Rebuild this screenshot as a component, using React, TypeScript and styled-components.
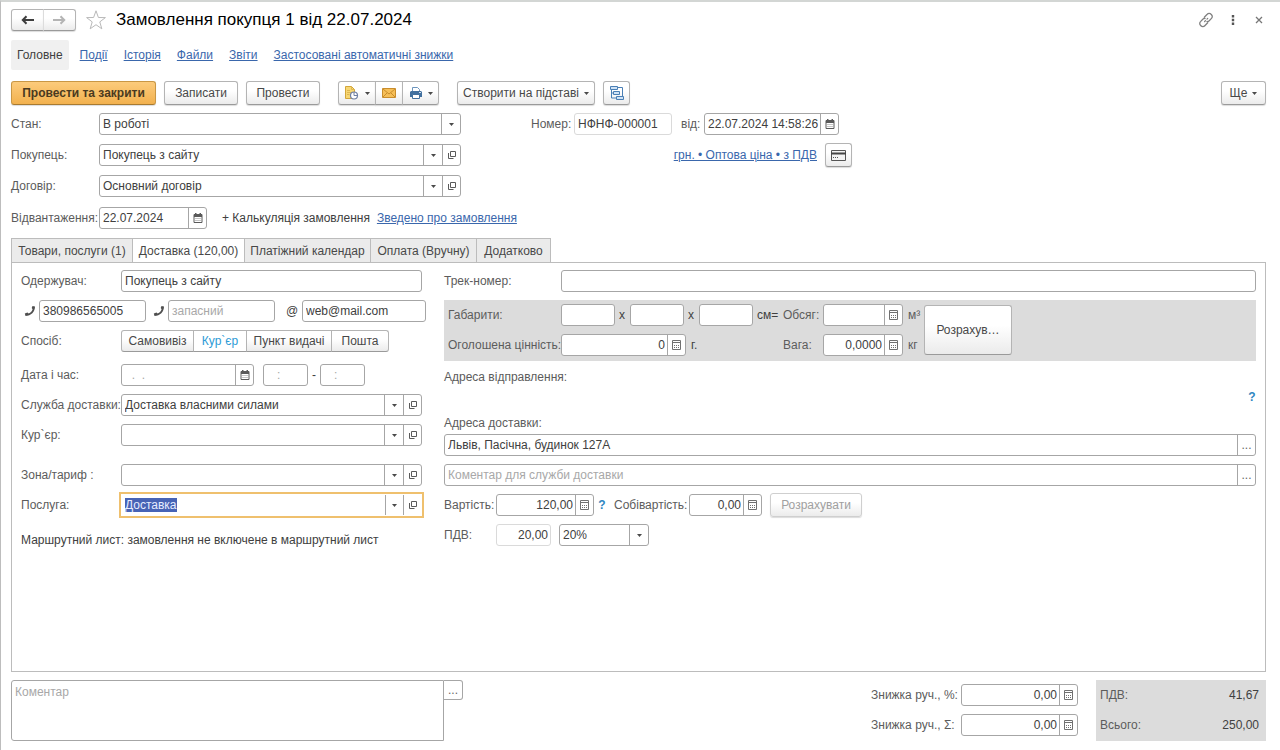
import React, { useEffect, useRef, useState } from "react";
import styled, { createGlobalStyle, css } from "styled-components";

const GlobalStyle = createGlobalStyle`
  *, *::before, *::after { box-sizing: border-box; }
  body { margin: 0; background: #fff; }
  body, button, input, select, textarea {
    font-family: "Liberation Sans", Arial, sans-serif;
    font-size: 12px;
    color: #404040;
  }
  button, input, select, textarea { margin: 0; }
  ::selection { background: #4763b5; color: #e6ecff; }
`;

const line = "#a6a6a6";

/* ---------- page frame ---------- */

const Page = styled.main`
  display: flex;
  flex-direction: column;
  min-height: 100vh;
  padding: 7px 14px 9px 10px;
  border-top: 2px solid #d3d6d4;
  border-left: 1px solid #bdbdbd;
`;

const TitleBar = styled.header`
  display: flex;
  align-items: center;
  height: 22px;
`;

const Title = styled.h1`
  flex: 1;
  margin: 0 0 0 9px;
  font-size: 17px;
  font-weight: 400;
  line-height: 22px;
  color: #000;
`;

const WindowActions = styled.div`
  display: flex;
  align-items: center;
  gap: 12px;
`;

const PlainButton = styled.button`
  display: flex;
  align-items: center;
  justify-content: center;
  min-width: 14px;
  height: 20px;
  padding: 0;
  border: 0;
  background: none;
`;

const StarButton = styled(PlainButton)`
  margin-left: 9px;
`;

const Sections = styled.nav`
  display: flex;
  align-items: center;
  gap: 16px;
  height: 30px;
  margin-top: 9px;
`;

const sectionLink = css`
  line-height: 14px;
`;

const CurrentSection = styled.a`
  ${sectionLink}
  margin-right: -5px;
  padding: 8px 6px;
  border-radius: 2px;
  background: #f0f0f0;
  color: #404040;
  text-decoration: none;
`;

const Link = styled.a`
  ${sectionLink}
  color: #3a67ac;
  text-decoration: underline;
`;

/* ---------- buttons ---------- */

const raised = css`
  border: 1px solid #b4b4b4;
  border-bottom-color: #9a9a9a;
  background: linear-gradient(#fff 40%, #ebebeb);
`;

const Toolbar = styled.div`
  display: flex;
  align-items: center;
  gap: 8px;
  height: 24px;
  margin-top: 11px;
`;

const Button = styled.button<{ $width?: number; $primary?: boolean }>`
  ${raised}
  display: flex;
  align-items: center;
  justify-content: center;
  gap: 5px;
  flex: none;
  min-width: ${(p) => p.$width ?? 26}px;
  height: 24px;
  padding: 0;
  border-radius: 3px;
  box-shadow: 0 1px 1px #dcdcdc;
  color: #484848;
  ${(p) =>
    p.$primary &&
    css`
      border-color: #c99745;
      border-bottom-color: #a87a30;
      background: linear-gradient(#fccb7c, #f2b14e);
      color: #4a3a20;
      font-weight: 700;
    `}
  &:disabled {
    color: #a0a0a0;
    border-color: #cfcfcf;
  }
`;

const ButtonGroup = styled.div`
  display: flex;
  flex: none;
  margin: 0 10px;
  & > button { border-radius: 0; }
  & > button + button { margin-left: -1px; }
  & > button:first-child { border-radius: 3px 0 0 3px; }
  & > button:last-child { border-radius: 0 3px 3px 0; }
`;

const HistoryGroup = styled(ButtonGroup)`
  margin: 0;
  & > button { height: 22px; min-width: 33px; }
  & > button + button { border-left-color: #dcdcdc; }
`;

const Spacer = styled.div`
  flex: 1;
`;

/* ---------- fields ---------- */

const FieldBox = styled.div<{ $width?: number; $focus?: boolean; $quiet?: boolean }>`
  display: flex;
  ${(p) => (p.$width ? css`flex: none; width: ${p.$width}px;` : css`flex: 1; min-width: 0;`)}
  height: 22px;
  border: 1px solid ${(p) => (p.$quiet ? "#dadada" : line)};
  border-radius: 3px;
  background: #fff;
  overflow: hidden;
  ${(p) =>
    p.$focus &&
    css`
      border-color: #fff;
      border-radius: 0;
      outline: 2px solid #efc06e;
    `}
`;

const TextInput = styled.input<{ $right?: boolean }>`
  flex: 1;
  min-width: 0;
  width: 0;
  height: 20px;
  padding: ${(p) => (p.$right ? "0 2px" : "0 0 0 3px")};
  border: 0;
  outline: 0;
  background: none;
  text-align: ${(p) => (p.$right ? "right" : "left")};
  &::placeholder { color: #a8a8a8; opacity: 1; }
`;

const CellButton = styled.button`
  display: flex;
  align-items: center;
  justify-content: center;
  flex: none;
  width: 18px;
  padding: 0;
  border: 0;
  border-left: 1px solid ${line};
  background: none;
  color: #666;
`;

const SelectBox = styled.div`
  display: grid;
  grid-template-columns: 1fr 19px;
  flex: 1;
  min-width: 0;
`;

const Select = styled.select`
  grid-area: 1 / 1 / 2 / 3;
  min-width: 0;
  height: 20px;
  padding: 0 20px 0 3px;
  border: 0;
  outline: 0;
  background: none;
  appearance: none;
`;

const SelectArrow = styled.span`
  grid-area: 1 / 2 / 2 / 3;
  display: flex;
  align-items: center;
  justify-content: center;
  border-left: 1px solid ${line};
  pointer-events: none;
`;

const Label = styled.label<{ $width?: number }>`
  flex: none;
  ${(p) => p.$width && css`width: ${p.$width}px;`}
  color: #5c5c5c;
  line-height: 14px;
  white-space: nowrap;
`;

const Text = styled.span`
  flex: none;
  line-height: 14px;
  white-space: nowrap;
`;

const Row = styled.div<{ $top?: number; $gap?: number }>`
  display: flex;
  align-items: center;
  gap: ${(p) => p.$gap ?? 0}px;
  height: 22px;
  margin-top: ${(p) => p.$top ?? 8}px;
`;

/* ---------- document header ---------- */

const DocumentHeader = styled.section`
  display: flex;
  gap: 70px;
  margin-top: 8px;
`;

const HeaderMain = styled.div`
  flex: 0 1 450px;
  min-width: 0;
`;

const HeaderSide = styled.div`
  flex: 0 1 321px;
`;

const PriceRow = styled(Row)`
  justify-content: flex-end;
`;

/* ---------- tabs ---------- */

const TabList = styled.div`
  display: flex;
  height: 25px;
  margin-top: 9px;
`;

const Tab = styled.button<{ $width: number }>`
  min-width: ${(p) => p.$width}px;
  height: 25px;
  padding: 0;
  border: 1px solid #bcbcbc;
  border-right-width: 0;
  background: #ebebeb;
  color: #484848;
  white-space: nowrap;
  &:last-child { border-right-width: 1px; }
  &[aria-selected="true"] {
    background: #fff;
    border-bottom-color: #fff;
  }
`;

const Panel = styled.section`
  display: grid;
  grid-template-columns: minmax(0, 401fr) minmax(0, 812fr);
  column-gap: 22px;
  flex: 1;
  margin-top: -1px;
  padding: 7px 9px;
  border: 1px solid #bcbcbc;
`;

const Column = styled.div`
  min-width: 0;
`;

const ContactsRow = styled(Row)`
  margin-right: -4px;
  padding-left: 3px;
`;

const ContactIcon = styled.span`
  display: flex;
  flex: none;
  width: 15px;
`;

const AtSign = styled(Text)`
  width: 16px;
`;

const Gap = styled.span<{ $size: number }>`
  flex: none;
  width: ${(p) => p.$size}px;
`;

const Segments = styled.div`
  display: flex;
`;

const Segment = styled.label<{ $width: number }>`
  ${raised}
  display: flex;
  align-items: center;
  justify-content: center;
  width: ${(p) => p.$width}px;
  height: 22px;
  margin-right: -1px;
  color: #484848;
  white-space: nowrap;
  &:first-child { border-radius: 3px 0 0 3px; }
  &:last-child { border-radius: 0 3px 3px 0; margin-right: 0; }
  &:has(input:checked) {
    background: #fff;
    color: #2d9bd6;
  }
  input {
    appearance: none;
    width: 0;
    height: 0;
    margin: 0;
    outline: 0;
  }
`;

const RouteNote = styled.p`
  margin: 17px 0 0;
  line-height: 14px;
`;

const Dimensions = styled.div`
  display: flex;
  align-items: center;
  gap: 4px;
  height: 61px;
  margin-top: 8px;
  padding: 0 0 1px 4px;
  background: #dcdcdc;
`;

const DimensionRows = styled.div`
  width: 472px;
`;

const TallButton = styled(Button)`
  height: 50px;
`;

const Caption = styled.div<{ $top: number }>`
  margin-top: ${(p) => p.$top}px;
  color: #5c5c5c;
  line-height: 14px;
`;

const HelpLine = styled.div`
  display: flex;
  justify-content: flex-end;
  height: 14px;
  margin-top: 6px;
`;

const Help = styled.button`
  flex: none;
  width: 8px;
  height: 14px;
  padding: 0;
  border: 0;
  background: none;
  color: #2f86c1;
  font-weight: 700;
  line-height: 14px;
`;

/* ---------- footer ---------- */

const Footer = styled.footer`
  display: flex;
  align-items: flex-start;
  height: 61px;
  margin-top: 8px;
`;

const CommentBox = styled.textarea`
  flex: 0 1 433px;
  height: 61px;
  padding: 4px 3px;
  border: 1px solid ${line};
  border-radius: 3px 0 0 3px;
  outline: 0;
  resize: none;
  line-height: 14px;
  &::placeholder { color: #a8a8a8; opacity: 1; }
`;

const CommentMore = styled.button`
  width: 19px;
  height: 20px;
  padding: 0;
  border: 1px solid ${line};
  border-left: 0;
  border-radius: 0 3px 3px 0;
  background: #fff;
  color: #666;
`;

const Discounts = styled.div`
  margin-right: 18px;
`;

const Totals = styled.dl`
  display: grid;
  grid-template-columns: auto 1fr;
  grid-template-rows: 30px 30px;
  align-items: center;
  width: 170px;
  height: 61px;
  margin: 0;
  padding: 0 7px 0 4px;
  background: #dcdcdc;
  dt { color: #5c5c5c; }
  dd { margin: 0; text-align: right; }
`;

/* ---------- icons ---------- */

const Arrow = () => (
  <svg width="5" height="3" viewBox="0 0 5 3" aria-hidden="true">
    <path d="M0 0h5L2.500 3z" fill="#4a4a4a" />
  </svg>
);

const OpenIcon = () => (
  <svg width="10" height="10" viewBox="0 0 10 10" fill="none" stroke="#5a5a5a" aria-hidden="true">
    <path d="M3.500 1.500h5v5h-5z" />
    <path d="M1.500 3.500v5h4.500M1 3.500h1M6 8v1" />
  </svg>
);

const CalendarIcon = () => (
  <svg width="10" height="10" viewBox="0 0 10 10" aria-hidden="true">
    <path d="M1 1.500h8v8H1z" fill="#fff" stroke="#5a5a5a" />
    <path d="M1 1h8v3H1zM2 0h1.500v2H2zM6.500 0H8v2H6.500z" fill="#5a5a5a" />
    <path d="M2.500 5.500h5M2.500 7.500h5" stroke="#8a8a8a" strokeDasharray="1 1" />
  </svg>
);

const CalculatorIcon = () => (
  <svg width="9" height="10" viewBox="0 0 9 10" fill="none" aria-hidden="true">
    <path d="M.5.5h8v9h-8z" stroke="#707070" />
    <path d="M1 2.500h7" stroke="#707070" />
    <path d="M2 5.500h5M2 7.500h5" stroke="#707070" strokeDasharray="1 1" />
  </svg>
);

const PhoneIcon = () => (
  <svg width="12" height="12" viewBox="0 0 12 12" aria-hidden="true">
    <path d="M8.500 1l2.500.5C11.200 6.500 7 11 1.500 11L.8 8.600l2.700-1 1.100 1C6.800 7.600 8.100 6 8.600 4.200L7.700 3z" fill="#4f4f4f" />
  </svg>
);

const HistoryArrow = ({ forward }: { forward?: boolean }) => (
  <svg width="13" height="10" viewBox="0 0 13 10" fill="none" strokeWidth="2" stroke={forward ? "#b4b4b4" : "#3e3e3e"} aria-hidden="true">
    {forward ? <path d="M0 5h11M7.500 1.300L11.200 5 7.500 8.700" /> : <path d="M13 5H2M5.500 1.300L1.800 5l3.700 3.700" />}
  </svg>
);

const StarIcon = () => (
  <svg width="22" height="22" viewBox="0 0 22 22" fill="#fff" stroke="#b9b9b9" aria-hidden="true">
    <path d="M11 1.800l2.400 6.700 7 .1-5.600 4.300 2 6.900L11 15.700l-5.800 4.100 2-6.900L1.600 8.600l7-.1z" />
  </svg>
);

const ChainIcon = () => (
  <svg width="16" height="16" viewBox="0 0 16 16" fill="none" stroke="#808080" strokeWidth="1.300" strokeLinecap="round" aria-hidden="true">
    <path d="M6.300 5.300l2.900-3a2.600 2.600 0 0 1 3.900 0l.4.400a2.600 2.600 0 0 1 0 3.700l-2.300 2.400a2.600 2.600 0 0 1-2.200.7" />
    <path d="M9.700 10.700l-2.900 3a2.600 2.600 0 0 1-3.900 0l-.4-.4a2.600 2.600 0 0 1 0-3.700l2.300-2.400a2.600 2.600 0 0 1 2.200-.7" />
    <path d="M6.600 9.600l.8-.8M9 7.100l.7-.7" />
  </svg>
);

const DotsIcon = () => (
  <svg width="4" height="12" viewBox="0 0 4 12" fill="#555" aria-hidden="true">
    <path d="M.8 1h2.400v2.400H.8zM.8 4.800h2.400v2.400H.8zM.8 8.600h2.400V11H.8z" />
  </svg>
);

const CloseIcon = () => (
  <svg width="8" height="8" viewBox="0 0 8 8" stroke="#777" strokeWidth="1.300" aria-hidden="true">
    <path d="M1 1l6 6M7 1L1 7" />
  </svg>
);

const ReportIcon = () => (
  <svg width="16" height="16" viewBox="0 0 16 16" fill="none" aria-hidden="true">
    <path d="M1.500 1.500h6l3 3v9h-9z" fill="#f7d774" stroke="#d3a63a" />
    <path d="M7.500 1.500v3h3M3 5.500h3M3 7.500h5M3 9.500h2.500" stroke="#dfb750" />
    <circle cx="10" cy="10.500" r="3.500" fill="#fff" stroke="#6f7fa3" strokeWidth="1.200" />
    <path d="M10 7v3.500h3.500" stroke="#6f7fa3" />
  </svg>
);

const MailIcon = () => (
  <svg width="14" height="10" viewBox="0 0 14 10" fill="none" aria-hidden="true">
    <path d="M.5.500h13v9H.5z" fill="#f6bf58" stroke="#c98d2c" />
    <path d="M1 1l6 5 6-5M1 9l4-4M13 9L9 5" stroke="#c98d2c" />
  </svg>
);

const PrinterIcon = () => (
  <svg width="14" height="14" viewBox="0 0 14 14" fill="none" aria-hidden="true">
    <path d="M3.500 1.500h5l2 2V6h-7z" fill="#fff" stroke="#6b94bd" />
    <path d="M2 5h10l1 1v5H1V6z" fill="#41709f" />
    <path d="M3.500 8.500h7v4h-7z" fill="#fff" stroke="#41709f" />
    <path d="M10 6.500h2" stroke="#cfe0ef" />
  </svg>
);

const StructureIcon = () => (
  <svg width="14" height="14" viewBox="0 0 14 14" fill="#cfe2f5" stroke="#4a7fb5" aria-hidden="true">
    <path d="M1.500 3.500v8.500h5M1.500 7h3M7.500 1.500h5v9" fill="none" />
    <path d="M.5.500h7v3h-7zM3.500 5.500h6v3h-6zM6.500 10.500h7v3h-7z" />
  </svg>
);

const CardIcon = () => (
  <svg width="15" height="11" viewBox="0 0 15 11" fill="none" aria-hidden="true">
    <path d="M.5.500h14v10H.5z" fill="#f4f4f4" stroke="#555" />
    <path d="M0 3.500h15" stroke="#444" strokeWidth="2" />
    <path d="M2 7.500h5" stroke="#555" strokeDasharray="1 1" />
  </svg>
);

/* ---------- composed controls ---------- */

type SelectFieldProps = { id: string; value: string; width?: number; open?: boolean };

const SelectField = ({ id, value, width, open }: SelectFieldProps) => (
  <FieldBox $width={width}>
    <SelectBox>
      <Select id={id} defaultValue={value}>
        <option value={value}>{value}</option>
      </Select>
      <SelectArrow><Arrow /></SelectArrow>
    </SelectBox>
    {open && <CellButton type="button" aria-label="Відкрити"><OpenIcon /></CellButton>}
  </FieldBox>
);

type InputFieldProps = {
  id: string;
  label?: string;
  value?: string;
  placeholder?: string;
  width?: number;
  right?: boolean;
  quiet?: boolean;
  cell?: "calendar" | "calculator" | "more";
};

const cells = {
  calendar: { name: "Календар", icon: <CalendarIcon /> },
  calculator: { name: "Калькулятор", icon: <CalculatorIcon /> },
  more: { name: "Вибрати", icon: "..." },
};

const InputField = ({ id, label, value, placeholder, width, right, quiet, cell }: InputFieldProps) => (
  <FieldBox $width={width} $quiet={quiet}>
    <TextInput id={id} aria-label={label} defaultValue={value} placeholder={placeholder} readOnly={quiet} $right={right} />
    {cell && <CellButton type="button" aria-label={cells[cell].name}>{cells[cell].icon}</CellButton>}
  </FieldBox>
);

const ServiceField = () => {
  const input = useRef<HTMLInputElement>(null);
  useEffect(() => {
    input.current?.focus();
    input.current?.select();
  }, []);
  return (
    <FieldBox $focus>
      <TextInput id="service" ref={input} defaultValue="Доставка" />
      <CellButton type="button" aria-label="Список"><Arrow /></CellButton>
      <CellButton type="button" aria-label="Відкрити"><OpenIcon /></CellButton>
    </FieldBox>
  );
};

const tabs = [
  { name: "Товари, послуги (1)", width: 121 },
  { name: "Доставка (120,00)", width: 112 },
  { name: "Платіжний календар", width: 126 },
  { name: "Оплата (Вручну)", width: 106 },
  { name: "Додатково", width: 75 },
];

const methods = [
  { name: "Самовивіз", width: 73 },
  { name: "Кур`єр", width: 54 },
  { name: "Пункт видачі", width: 86 },
  { name: "Пошта", width: 58 },
];

export default function App() {
  const [tab, setTab] = useState(1);

  return (
    <Page>
      <GlobalStyle />
      <TitleBar>
        <HistoryGroup>
          <Button type="button" aria-label="Назад"><HistoryArrow /></Button>
          <Button type="button" aria-label="Вперед"><HistoryArrow forward /></Button>
        </HistoryGroup>
        <StarButton type="button" aria-label="В обране"><StarIcon /></StarButton>
        <Title>Замовлення покупця 1 від 22.07.2024</Title>
        <WindowActions>
          <PlainButton type="button" aria-label="Посилання"><ChainIcon /></PlainButton>
          <PlainButton type="button" aria-label="Меню"><DotsIcon /></PlainButton>
          <PlainButton type="button" aria-label="Закрити"><CloseIcon /></PlainButton>
        </WindowActions>
      </TitleBar>

      <Sections>
        <CurrentSection href="#main">Головне</CurrentSection>
        <Link href="#events">Події</Link>
        <Link href="#history">Історія</Link>
        <Link href="#files">Файли</Link>
        <Link href="#reports">Звіти</Link>
        <Link href="#discounts">Застосовані автоматичні знижки</Link>
      </Sections>

      <Toolbar>
        <Button type="button" $primary $width={145}>Провести та закрити</Button>
        <Button type="button" $width={74}>Записати</Button>
        <Button type="button" $width={74}>Провести</Button>
        <ButtonGroup>
          <Button type="button" $width={38} aria-label="Звіти"><ReportIcon /><Arrow /></Button>
          <Button type="button" $width={28} aria-label="Надіслати"><MailIcon /></Button>
          <Button type="button" $width={37} aria-label="Друк"><PrinterIcon /><Arrow /></Button>
        </ButtonGroup>
        <Button type="button" $width={138}>Створити на підставі<Arrow /></Button>
        <Button type="button" $width={27} aria-label="Структура"><StructureIcon /></Button>
        <Spacer />
        <Button type="button" $width={45}>Ще<Arrow /></Button>
      </Toolbar>

      <DocumentHeader>
        <HeaderMain>
          <Row $top={0}>
            <Label $width={88} htmlFor="state">Стан:</Label>
            <SelectField id="state" value="В роботі" />
          </Row>
          <Row $top={9}>
            <Label $width={88} htmlFor="buyer">Покупець:</Label>
            <SelectField id="buyer" value="Покупець з сайту" open />
          </Row>
          <Row $top={9}>
            <Label $width={88} htmlFor="contract">Договір:</Label>
            <SelectField id="contract" value="Основний договір" open />
          </Row>
          <Row $top={10}>
            <Label $width={88} htmlFor="shipment">Відвантаження:</Label>
            <InputField id="shipment" value="22.07.2024" width={108} cell="calendar" />
            <Gap $size={15} />
            <Text>+ Калькуляція замовлення</Text>
            <Gap $size={7} />
            <Link href="#summary"><Text>Зведено про замовлення</Text></Link>
          </Row>
        </HeaderMain>
        <HeaderSide>
          <Row $top={0}>
            <Label $width={43} htmlFor="number">Номер:</Label>
            <InputField id="number" value="НФНФ-000001" width={98} quiet />
            <Gap $size={9} />
            <Label $width={23} htmlFor="date">від:</Label>
            <InputField id="date" value="22.07.2024 14:58:26" width={135} cell="calendar" />
          </Row>
          <PriceRow $top={9} $gap={8}>
            <Link href="#prices">грн. • Оптова ціна • з ПДВ</Link>
            <Button type="button" $width={27} aria-label="Картка"><CardIcon /></Button>
          </PriceRow>
        </HeaderSide>
      </DocumentHeader>

      <TabList role="tablist">
        {tabs.map((t, i) => (
          <Tab key={t.name} type="button" role="tab" aria-selected={i === tab} $width={t.width} onClick={() => setTab(i)}>
            {t.name}
          </Tab>
        ))}
      </TabList>

      <Panel role="tabpanel">
        <Column>
          <Row $top={0}>
            <Label $width={100} htmlFor="recipient">Одержувач:</Label>
            <InputField id="recipient" value="Покупець з сайту" />
          </Row>
          <ContactsRow>
            <ContactIcon><PhoneIcon /></ContactIcon>
            <InputField id="phone" label="Телефон" value="380986565005" width={107} />
            <Gap $size={7} />
            <ContactIcon><PhoneIcon /></ContactIcon>
            <InputField id="phone2" label="Запасний телефон" placeholder="запасний" width={107} />
            <Gap $size={11} />
            <AtSign>@</AtSign>
            <InputField id="email" label="Пошта" value="web@mail.com" />
          </ContactsRow>
          <Row>
            <Label as="span" $width={100}>Спосіб:</Label>
            <Segments role="radiogroup" aria-label="Спосіб">
              {methods.map((m, i) => (
                <Segment key={m.name} $width={m.width}>
                  <input type="radio" name="method" defaultChecked={i === 1} />
                  {m.name}
                </Segment>
              ))}
            </Segments>
          </Row>
          <Row $top={12}>
            <Label $width={100} htmlFor="delivery-date">Дата і час:</Label>
            <InputField id="delivery-date" placeholder="  .  ." width={133} cell="calendar" />
            <Gap $size={9} />
            <InputField id="time-from" label="Час від" placeholder="   :" width={45} />
            <Gap $size={4} />
            <Text>-</Text>
            <Gap $size={4} />
            <InputField id="time-to" label="Час до" placeholder="   :" width={45} />
          </Row>
          <Row>
            <Label $width={100} htmlFor="carrier">Служба доставки:</Label>
            <SelectField id="carrier" value="Доставка власними силами" open />
          </Row>
          <Row>
            <Label $width={100} htmlFor="courier">Кур`єр:</Label>
            <SelectField id="courier" value="" open />
          </Row>
          <Row $top={18}>
            <Label $width={100} htmlFor="zone">Зона/тариф :</Label>
            <SelectField id="zone" value="" open />
          </Row>
          <Row>
            <Label $width={100} htmlFor="service">Послуга:</Label>
            <ServiceField />
          </Row>
          <RouteNote>Маршрутний лист: замовлення не включене в маршрутний лист</RouteNote>
        </Column>

        <Column>
          <Row $top={0}>
            <Label $width={117} htmlFor="track">Трек-номер:</Label>
            <InputField id="track" />
          </Row>
          <Dimensions>
            <DimensionRows>
              <Row $top={0}>
                <Label $width={113} htmlFor="length">Габарити:</Label>
                <InputField id="length" width={54} />
                <Gap $size={4} />
                <Text>x</Text>
                <Gap $size={5} />
                <InputField id="width" label="Ширина" width={54} />
                <Gap $size={4} />
                <Text>x</Text>
                <Gap $size={5} />
                <InputField id="height" label="Висота" width={54} />
                <Gap $size={4} />
                <Text>см=</Text>
                <Spacer />
                <Label $width={40} htmlFor="volume">Обсяг:</Label>
                <InputField id="volume" width={80} cell="calculator" />
                <Gap $size={5} />
                <Label as="span" $width={12}>м³</Label>
              </Row>
              <Row>
                <Label $width={113} htmlFor="declared">Оголошена цінність:</Label>
                <InputField id="declared" value="0" width={125} right cell="calculator" />
                <Gap $size={5} />
                <Text>г.</Text>
                <Spacer />
                <Label $width={40} htmlFor="weight">Вага:</Label>
                <InputField id="weight" value="0,0000" width={80} right cell="calculator" />
                <Gap $size={5} />
                <Label as="span" $width={12}>кг</Label>
              </Row>
            </DimensionRows>
            <TallButton type="button" $width={88}>Розрахув…</TallButton>
          </Dimensions>
          <Caption $top={9}>Адреса відправлення:</Caption>
          <HelpLine><Help type="button">?</Help></HelpLine>
          <Caption as="label" htmlFor="address" $top={0}>
            <Row>Адреса доставки:</Row>
          </Caption>
          <Row $top={0}>
            <InputField id="address" value="Львів, Пасічна, будинок 127А" cell="more" />
          </Row>
          <Row>
            <InputField id="courier-note" label="Коментар для служби доставки" placeholder="Коментар для служби доставки" cell="more" />
          </Row>
          <Row>
            <Label $width={52} htmlFor="cost">Вартість:</Label>
            <InputField id="cost" value="120,00" width={98} right cell="calculator" />
            <Gap $size={4} />
            <Help type="button">?</Help>
            <Gap $size={8} />
            <Label $width={75} htmlFor="prime">Собівартість:</Label>
            <InputField id="prime" value="0,00" width={73} right cell="calculator" />
            <Gap $size={8} />
            <Button type="button" disabled $width={92}>Розрахувати</Button>
          </Row>
          <Row>
            <Label $width={52} htmlFor="vat">ПДВ:</Label>
            <InputField id="vat" value="20,00" width={55} right quiet />
            <Gap $size={8} />
            <SelectField id="vat-rate" value="20%" width={90} />
          </Row>
        </Column>
      </Panel>

      <Footer>
        <CommentBox aria-label="Коментар" placeholder="Коментар" />
        <CommentMore type="button" aria-label="Відкрити коментар">...</CommentMore>
        <Spacer />
        <Discounts>
          <Row $top={4}>
            <Label $width={90} htmlFor="discount-percent">Знижка руч., %:</Label>
            <InputField id="discount-percent" value="0,00" width={117} right cell="calculator" />
          </Row>
          <Row>
            <Label $width={90} htmlFor="discount-sum">Знижка руч., Σ:</Label>
            <InputField id="discount-sum" value="0,00" width={117} right cell="calculator" />
          </Row>
        </Discounts>
        <Totals>
          <dt>ПДВ:</dt>
          <dd>41,67</dd>
          <dt>Всього:</dt>
          <dd>250,00</dd>
        </Totals>
      </Footer>
    </Page>
  );
}
